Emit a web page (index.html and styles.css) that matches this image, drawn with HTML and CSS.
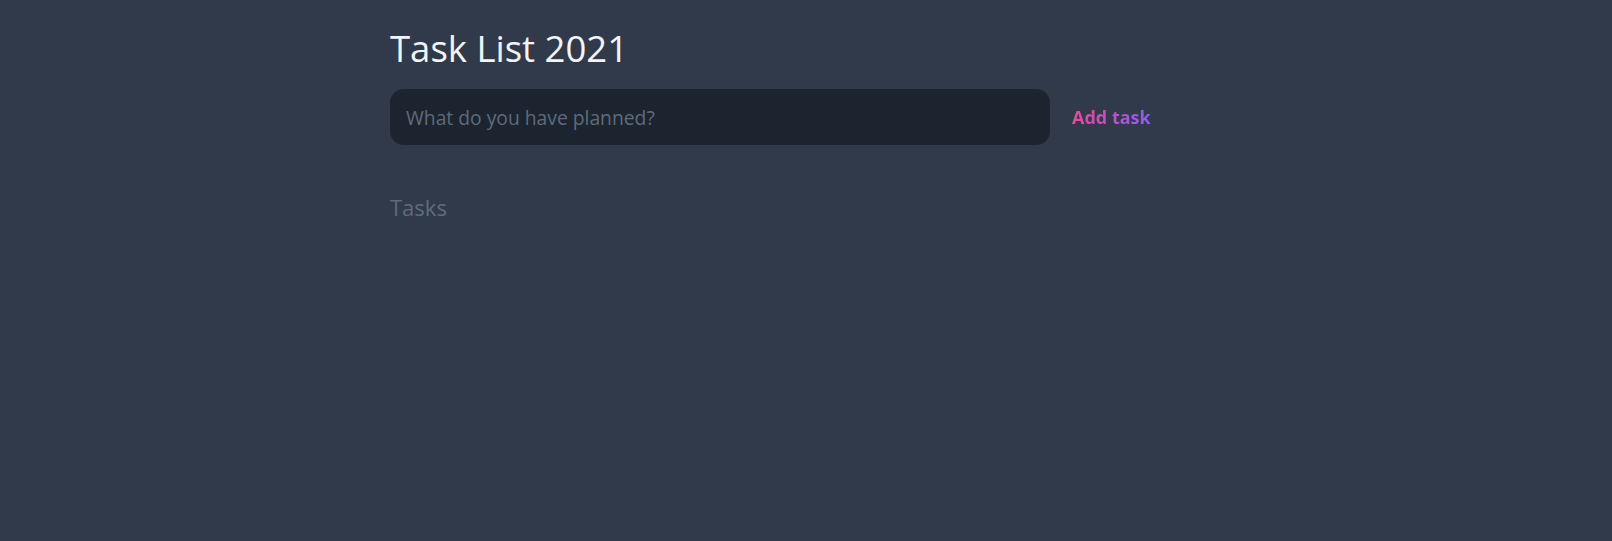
FILE: index.html
```html
<!DOCTYPE html>
<html>
<head>
<meta charset="utf-8">
<link rel="stylesheet" href="styles.css">
</head>
<body>
<main class="container">
  <h1 class="title">Task List 2021</h1>
  <form class="new-task">
    <input class="task-input" type="text" placeholder="What do you have planned?">
    <button class="add-btn" type="button"><span class="grad">Add task</span></button>
  </form>
  <section class="tasks">
    <h2 class="tasks-title">Tasks</h2>
  </section>
</main>
</body>
</html>
```
FILE: styles.css
```css
html, body {
  margin: 0;
  padding: 0;
  background: #313a4a;
  height: 100%;
}
body {
  font-family: "Open Sans", "Noto Sans", sans-serif;
}
.container {
  width: 832px;
  margin: 0 auto;
  padding-top: 22px;
  box-sizing: border-box;
}
.title {
  margin: 0;
  font-size: 36.5px;
  font-weight: 400;
  color: #f3f4f6;
  line-height: 52px;
}
.new-task {
  display: flex;
  align-items: center;
  margin-top: 15px;
}
.task-input {
  width: 660px;
  height: 56px;
  box-sizing: border-box;
  border: none;
  outline: none;
  border-radius: 14px;
  background: #1c2430;
  padding: 0 16px;
  font-family: inherit;
  font-size: 19.3px;
  color: #e5e7eb;
}
.task-input::placeholder {
  color: #5f6b7c;
}
.add-btn {
  margin-left: 22px;
  background: none;
  border: none;
  padding: 0;
  font-family: inherit;
  font-size: 18px;
  font-weight: 700;
  cursor: pointer;
}
.grad {
  background: linear-gradient(90deg, #ec4899, #8b5cf6);
  -webkit-background-clip: text;
  background-clip: text;
  color: transparent;
}
.tasks {
  margin-top: 47px;
}
.tasks-title {
  margin: 0;
  font-size: 22px;
  font-weight: 400;
  color: #5f6b7d;
}
```
